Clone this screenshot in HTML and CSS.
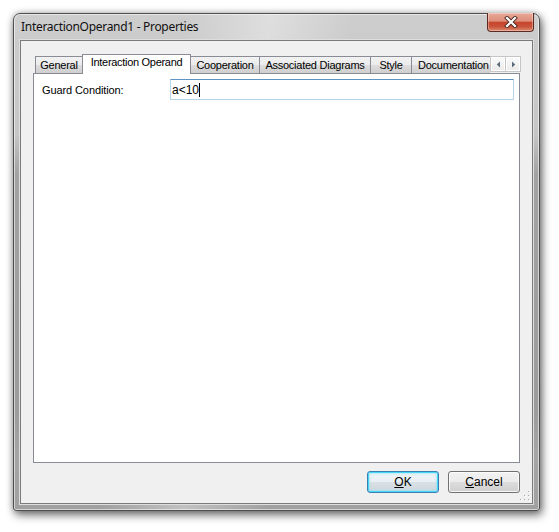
FILE: index.html
```html
<!DOCTYPE html>
<html>
<head>
<meta charset="utf-8">
<link rel="stylesheet" href="styles.css">
</head>
<body>
<div class="window">
  <div class="titlebar">
    <div class="title">InteractionOperand1 - Properties</div>
    <div class="close">
      <svg width="14" height="12" viewBox="0 0 14 12">
        <path d="M3 2 L11 10 M11 2 L3 10" stroke="#4a2a22" stroke-width="4" stroke-linecap="square" fill="none"/>
        <path d="M3 2 L11 10 M11 2 L3 10" stroke="#ffffff" stroke-width="2.2" stroke-linecap="square" fill="none"/>
      </svg>
    </div>
  </div>
  <div class="client">
    <div class="tabstrip">
      <div class="tabs">
        <div class="tab t-general">General</div>
        <div class="tab sel t-op">Interaction Operand</div>
        <div class="tab t-coop">Cooperation</div>
        <div class="tab t-assoc">Associated Diagrams</div>
        <div class="tab t-style">Style</div>
        <div class="tab t-doc">Documentation</div>
      </div>
      <div class="arrows">
        <div class="arrow"><svg width="5" height="7" viewBox="0 0 5 7"><path d="M4 0.5 L0.8 3.5 L4 6.5 Z" fill="#5a6a7a"/></svg></div>
        <div class="arrow"><svg width="5" height="7" viewBox="0 0 5 7"><path d="M1 0.5 L4.2 3.5 L1 6.5 Z" fill="#5a6a7a"/></svg></div>
      </div>
    </div>
    <div class="panel">
      <div class="row">
        <div class="label">Guard Condition:</div>
        <div class="input"><span class="val">a&lt;10</span><span class="caret"></span></div>
      </div>
    </div>
    <div class="buttons">
      <div class="btn default"><span><u>O</u>K</span></div>
      <div class="btn"><span><u>C</u>ancel</span></div>
    </div>
    <svg class="grip" width="10" height="10" viewBox="0 0 10 10">
      <g fill="#ffffff">
        <rect x="9" y="1" width="1" height="1"/>
        <rect x="9" y="5" width="1" height="1"/><rect x="5" y="5" width="1" height="1"/>
        <rect x="9" y="9" width="1" height="1"/><rect x="5" y="9" width="1" height="1"/><rect x="1" y="9" width="1" height="1"/>
      </g>
      <g fill="#a9a9a9">
        <rect x="8" y="0" width="1" height="1"/>
        <rect x="8" y="4" width="1" height="1"/><rect x="4" y="4" width="1" height="1"/>
        <rect x="8" y="8" width="1" height="1"/><rect x="4" y="8" width="1" height="1"/><rect x="0" y="8" width="1" height="1"/>
      </g>
    </svg>
  </div>
</div>
</body>
</html>
```

FILE: styles.css
```css
html, body {
  margin: 0;
  padding: 0;
  background: #ffffff;
}
body {
  width: 559px;
  height: 532px;
  overflow: hidden;
  font-family: "Liberation Sans", Arial, sans-serif;
  font-size: 11px;
  color: #000;
}
.window {
  margin: 13px 0 0 13px;
  width: 527px;
  height: 498px;
  box-sizing: border-box;
  border: 1px solid #4f4f4f;
  border-radius: 7px 7px 3px 3px;
  background:
    linear-gradient(100deg, rgba(255,255,255,0) 0%, rgba(255,255,255,0) 28%, rgba(255,255,255,0.35) 42%, rgba(255,255,255,0) 56%, rgba(255,255,255,0) 100%),
    linear-gradient(to bottom, #cdcdcd 0px, #c6c6c6 120px, #a2a2a2 160px, #9c9c9c 400px, #a5a5a5 440px, #a0a0a0 100%);
  box-shadow: inset 0 0 0 1px rgba(255,255,255,0.55), 2px 4px 10px rgba(0,0,0,0.55), 0 0 6px rgba(0,0,0,0.25);
  display: flex;
  flex-direction: column;
}
.titlebar {
  height: 26px;
  display: flex;
  justify-content: space-between;
  align-items: flex-start;
  flex: none;
}
.title {
  font-family: "Noto Sans", "Open Sans", sans-serif;
  font-size: 12px;
  color: #111;
  padding: 5px 0 0 7px;
  line-height: 15px;
  letter-spacing: -0.3px;
}
.close {
  margin: -1px 5px 0 0;
  width: 47px;
  height: 19px;
  box-sizing: border-box;
  border: 1px solid #5b2b23;
  border-top: none;
  border-radius: 0 0 4px 4px;
  background: linear-gradient(to bottom, #e9a898 0%, #dd8e7a 45%, #c7452c 52%, #c9533a 75%, #dc8a6e 100%);
  box-shadow: inset 0 0 0 1px rgba(255,255,255,0.35);
  display: flex;
  align-items: center;
  justify-content: center;
}
.close svg { display: block; }
.client {
  position: relative;
  margin: 0 6px 6px 6px;
  flex: 1;
  border: 1px solid #7b7b7b;
  background: #f0f0f0;
  box-shadow: 0 0 0 1px #dedede;
  padding: 13px 12px 0 12px;
}
.tabstrip {
  display: flex;
  align-items: flex-end;
  height: 19px;
}
.tabs {
  display: flex;
  align-items: flex-end;
  width: 455px;
  padding-left: 2px;
  overflow: hidden;
  flex: none;
  height: 20px;
  margin-bottom: -1px;
}
.tab {
  box-sizing: border-box;
  flex: none;
  height: 17px;
  margin-bottom: 1px;
  margin-left: -1px;
  border: 1px solid #898c95;
  border-bottom: none;
  background: linear-gradient(to bottom, #f2f2f2 0%, #ebebeb 50%, #dddddd 51%, #cfcfcf 100%);
  text-align: center;
  line-height: 17px;
  letter-spacing: -0.25px;
  white-space: nowrap;
  overflow: hidden;
}
.tab:first-child { margin-left: 0; }
.tab.sel {
  position: relative;
  z-index: 2;
  height: 20px;
  margin-bottom: 0;
  background: #ffffff;
  line-height: 15px;
  letter-spacing: -0.3px;
}
.t-general { width: 48px; }
.t-op { width: 109px; }
.t-coop { width: 70px; }
.t-assoc { width: 112px; }
.t-style { width: 42px; }
.t-doc { width: 90px; text-align: left; padding-left: 6px; }
.arrows {
  display: flex;
  margin-bottom: 1px;
}
.arrow {
  box-sizing: border-box;
  width: 16px;
  height: 16px;
  margin-left: -1px;
  border: 1px solid #c6c6c6;
  background: linear-gradient(to bottom, #fbfbfb, #eaeaea);
  box-shadow: inset 0 0 0 1px #ffffff;
  display: flex;
  align-items: center;
  justify-content: center;
}
.arrow:first-child { margin-left: 0; }
.arrow svg { display: block; }
.panel {
  position: relative;
  z-index: 1;
  box-sizing: border-box;
  width: 487px;
  height: 390px;
  border: 1px solid #898c95;
  background: #ffffff;
  padding: 5px 5px 0 8px;
}
.row {
  display: flex;
  align-items: center;
}
.label {
  width: 128px;
  flex: none;
  padding-top: 1px;
  letter-spacing: -0.1px;
}
.input {
  flex: 1;
  box-sizing: border-box;
  height: 21px;
  border: 1px solid #b7d5ea;
  border-top-color: #5d94c4;
  background: #ffffff;
  padding: 3px 0 0 1px;
  display: flex;
  align-items: flex-start;
  line-height: 14px;
  font-size: 12px;
}
.caret {
  display: inline-block;
  width: 1px;
  height: 14px;
  background: #000;
}
.buttons {
  display: flex;
  justify-content: flex-end;
  gap: 9px;
  margin-top: 8px;
  width: 487px;
}
.btn {
  box-sizing: border-box;
  width: 72px;
  height: 22px;
  border: 1px solid #707070;
  border-radius: 3px;
  background: linear-gradient(to bottom, #f2f2f2 0%, #ebebeb 50%, #dddddd 51%, #cfcfcf 100%);
  box-shadow: inset 0 0 0 1px rgba(255,255,255,0.8);
  display: flex;
  align-items: center;
  justify-content: center;
  font-size: 12px;
}
.btn.default {
  border-color: #3c7fb1;
  box-shadow: inset 0 0 0 1px #48d6f7, inset 0 0 2px 2px rgba(128,226,250,0.5);
  background: linear-gradient(to bottom, #f1f5f8 0%, #e9eff3 50%, #dae1e6 51%, #cfd7dd 100%);
}
.grip {
  position: absolute;
  right: 2px;
  bottom: 2px;
  display: block;
}
```
